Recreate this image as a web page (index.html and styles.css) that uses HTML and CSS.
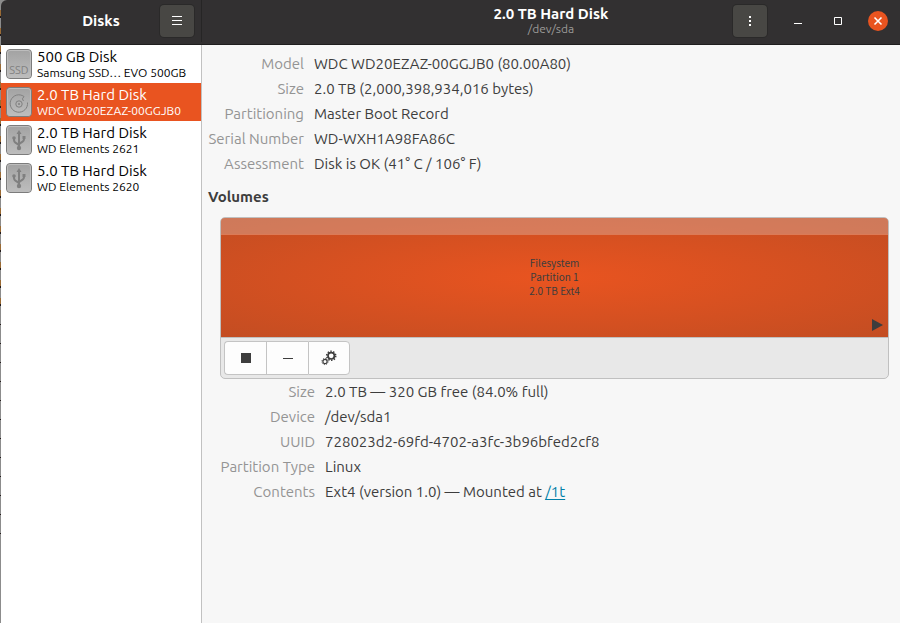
FILE: index.html
```html
<!DOCTYPE html>
<html lang="en">
<head>
<meta charset="utf-8">
<title>Disks</title>
<link rel="stylesheet" href="styles.css">
</head>
<body>
<div class="window">
  <header class="titlebar">
    <div class="titlebar-side">
      <h1 class="app-title">Disks</h1>
      <button class="header-button" type="button" aria-label="Application menu">
        <svg width="16" height="16" viewBox="0 0 16 16"><path d="M3 3.500h10M3 7.500h10M3 11.500h10" stroke="#fff"/></svg>
      </button>
    </div>
    <div class="titlebar-main">
      <div class="disk-title">
        <h2>2.0 TB Hard Disk</h2>
        <p>/dev/sda</p>
      </div>
      <div class="controls">
        <button class="header-button" type="button" aria-label="Drive options">
          <svg width="16" height="16" viewBox="0 0 16 16"><path d="M7 3h2v2H7zM7 7h2v2H7zM7 11h2v2H7z" fill="#fff"/></svg>
        </button>
        <button class="window-button" type="button" aria-label="Minimize">
          <svg width="20" height="20" viewBox="0 0 20 20"><path d="M6 12h8v1H6z" fill="#fff"/></svg>
        </button>
        <button class="window-button" type="button" aria-label="Maximize">
          <svg width="20" height="20" viewBox="0 0 20 20"><path d="M6.500 6.500h7v7h-7z" fill="none" stroke="#fff"/></svg>
        </button>
        <button class="window-button close" type="button" aria-label="Close">
          <svg width="20" height="20" viewBox="0 0 20 20"><path d="M6.500 6.500l7 7M13.500 6.500l-7 7" stroke="#fff" stroke-width="1.600"/></svg>
        </button>
      </div>
    </div>
  </header>

  <div class="content">
    <nav class="sidebar" aria-label="Drives">
      <button class="drive" type="button">
        <svg class="drive-icon" width="26" height="30" viewBox="0 0 26 30">
          <defs>
            <linearGradient id="metal" x1="0" y1="0" x2="0" y2="1">
              <stop offset="0" stop-color="#a2a2a2"/><stop offset="1" stop-color="#bebebe"/>
            </linearGradient>
          </defs>
          <rect class="case" x=".5" y=".5" width="25" height="29" rx="3.500"/><rect class="shine" x="1.500" y="1.500" width="23" height="27" rx="2.500"/>
          <text class="drive-tag" x="13" y="25" text-anchor="middle">SSD</text>
        </svg>
        <span class="drive-text"><span class="drive-name">500 GB Disk</span><span class="drive-model">Samsung SSD… EVO 500GB</span></span>
      </button>
      <button class="drive selected" type="button" aria-current="true">
        <svg class="drive-icon" width="26" height="30" viewBox="0 0 26 30">
          <rect class="case" x=".5" y=".5" width="25" height="29" rx="3.500"/><rect class="shine" x="1.500" y="1.500" width="23" height="27" rx="2.500"/>
          <path class="mark-line" d="M18 9.500A8.700 8.700 0 1 0 21.500 15.500M18 9.500Q15 12 17.500 14"/>
          <circle class="mark-line" cx="13" cy="17" r="3.200"/>
          <circle class="mark" cx="13" cy="17" r="1"/>
        </svg>
        <span class="drive-text"><span class="drive-name">2.0 TB Hard Disk</span><span class="drive-model">WDC WD20EZAZ-00GGJB0</span></span>
      </button>
      <button class="drive" type="button">
        <svg class="drive-icon" width="26" height="30" viewBox="0 0 26 30">
          <rect class="case" x=".5" y=".5" width="25" height="29" rx="3.500"/><rect class="shine" x="1.500" y="1.500" width="23" height="27" rx="2.500"/>
          <path class="mark-line usb" d="M13 23V8M13 21c0-3-5-2-5-6v-2M13 20c0-3 5-2 5-6v-2"/>
          <path class="mark" d="M13 5l2.500 4h-5zM16.500 11h3v3h-3z"/><circle class="mark" cx="8" cy="13" r="1.800"/><circle class="mark" cx="13" cy="23" r="2.200"/>
        </svg>
        <span class="drive-text"><span class="drive-name">2.0 TB Hard Disk</span><span class="drive-model">WD Elements 2621</span></span>
      </button>
      <button class="drive" type="button">
        <svg class="drive-icon" width="26" height="30" viewBox="0 0 26 30">
          <rect class="case" x=".5" y=".5" width="25" height="29" rx="3.500"/><rect class="shine" x="1.500" y="1.500" width="23" height="27" rx="2.500"/>
          <path class="mark-line usb" d="M13 23V8M13 21c0-3-5-2-5-6v-2M13 20c0-3 5-2 5-6v-2"/>
          <path class="mark" d="M13 5l2.500 4h-5zM16.500 11h3v3h-3z"/><circle class="mark" cx="8" cy="13" r="1.800"/><circle class="mark" cx="13" cy="23" r="2.200"/>
        </svg>
        <span class="drive-text"><span class="drive-name">5.0 TB Hard Disk</span><span class="drive-model">WD Elements 2620</span></span>
      </button>
    </nav>

    <main class="details">
      <dl class="facts">
        <dt>Model</dt><dd>WDC WD20EZAZ-00GGJB0 (80.00A80)</dd>
        <dt>Size</dt><dd>2.0 TB (2,000,398,934,016 bytes)</dd>
        <dt>Partitioning</dt><dd>Master Boot Record</dd>
        <dt>Serial Number</dt><dd>WD-WXH1A98FA86C</dd>
        <dt>Assessment</dt><dd>Disk is OK (41° C / 106° F)</dd>
      </dl>

      <h3 class="section-title">Volumes</h3>

      <section class="volumes" aria-label="Volumes">
        <div class="volume-map">
          <div class="free-band"></div>
          <div class="partition">
            <p>Filesystem<br>Partition 1<br>2.0 TB Ext4</p>
            <svg class="mounted" width="11" height="12" viewBox="0 0 11 12"><path d="M0 0l11 6-11 6z" fill="#3d3d3d"/></svg>
          </div>
        </div>
        <div class="toolbar">
          <div class="button-group">
            <button type="button" aria-label="Unmount selected partition">
              <svg width="16" height="16" viewBox="0 0 16 16"><path d="M3 3h10v10H3z" fill="#3d3d3d"/></svg>
            </button>
            <button type="button" aria-label="Delete selected partition">
              <svg width="16" height="16" viewBox="0 0 16 16"><path d="M3 8h10v1H3z" fill="#3d3d3d"/></svg>
            </button>
            <button type="button" aria-label="Additional partition options">
              <svg width="16" height="16" viewBox="0 0 16 16" fill="none" stroke="#3d3d3d">
                <circle cx="10.200" cy="5.800" r="3.200" stroke-width="1.700"/>
                <circle cx="10.200" cy="5.800" r="4.500" stroke-width="1.600" stroke-dasharray="1.400 1.427"/>
                <circle cx="4" cy="11.500" r="2.100" stroke-width="1.200"/>
                <circle cx="4" cy="11.500" r="3.100" stroke-width="1" stroke-dasharray="1.100 1.335"/>
              </svg>
            </button>
          </div>
        </div>
      </section>

      <dl class="facts volume-facts">
        <dt>Size</dt><dd>2.0 TB — 320 GB free (84.0% full)</dd>
        <dt>Device</dt><dd>/dev/sda1</dd>
        <dt>UUID</dt><dd>728023d2-69fd-4702-a3fc-3b96bfed2cf8</dd>
        <dt>Partition Type</dt><dd>Linux</dd>
        <dt>Contents</dt><dd>Ext4 (version 1.0) — Mounted at <a href="#">/1t</a></dd>
      </dl>
    </main>
  </div>
</div>
</body>
</html>
```
FILE: styles.css
```css
* { box-sizing: border-box; }

body {
  margin: 0;
  padding-left: 1px;
  min-height: 100vh;
  background: repeating-linear-gradient(#8c8c8c 0 10px, #9a6a34 10px 16px, #221a1a 16px 18px) 0 0 / 100% 306px no-repeat,
    repeating-linear-gradient(#8c8c8c 0 18px, #221a1a 18px 19px) 0 306px / 100% 246px no-repeat #8c8c8c;
  color: #3d3d3d;
  font: 15px/25px Ubuntu, "Noto Sans", sans-serif;
}

h1, h2, h3, p, dl, dd { margin: 0; }

button {
  padding: 0;
  border: 0;
  background: none;
  color: inherit;
  font: inherit;
}

svg { display: block; }

.window {
  display: flex;
  flex-direction: column;
  min-height: 100vh;
}

/* Title bar */
.titlebar {
  display: flex;
  height: 45px;
  padding-bottom: 2px;
  background: #323031;
  border-bottom: 1px solid #1f1e1e;
  border-top-left-radius: 6px;
  color: #fff;
}

.titlebar-side,
.titlebar-main {
  display: grid;
  grid-template-columns: 1fr auto 1fr;
  align-items: center;
}

.titlebar-side {
  width: 201px;
  padding: 0 7px;
  border-right: 1px solid #262525;
}

.titlebar-main {
  flex: 1;
  padding: 0 12px;
}

.app-title,
.disk-title h2 {
  font-size: 15px;
  font-weight: 700;
  line-height: 16px;
}

.app-title { grid-column: 2; }

.titlebar-side .header-button { justify-self: end; }

.disk-title {
  grid-column: 2;
  text-align: center;
}

.disk-title p {
  color: #9b9a98;
  font-size: 12px;
  line-height: 14px;
}

.header-button {
  display: grid;
  place-items: center;
  width: 34px;
  height: 32px;
  border-radius: 4px;
  background: #484744;
  box-shadow: 0 0 0 1px #2a2929;
}

.controls {
  display: flex;
  align-items: center;
  justify-self: end;
  gap: 20px;
}

.window-button { border-radius: 50%; }
.controls .header-button { margin-right: 1px; }
.close { background: #e95420; }

/* Drive list */
.content {
  display: flex;
  flex: 1;
}

.sidebar {
  width: 201px;
  border-right: 1px solid #c1c1c1;
  background: #fff;
}

.drive {
  display: flex;
  align-items: center;
  gap: 5px;
  width: 100%;
  height: 38px;
  padding-left: 5px;
  color: #000;
  text-align: left;
  white-space: nowrap;
}

.drive.selected {
  background: #e95420;
  color: #fff;
}

.drive-name,
.drive-model { display: block; }

.drive-name { line-height: 16px; }

.drive-model {
  font-size: 12px;
  line-height: 15px;
}

.drive-icon { flex: none; }
.case { fill: url(#metal); stroke: #7c7c7c; }
.shine { fill: none; stroke: #bdbdbd; }
.mark { fill: #808080; }
.mark-line { fill: none; stroke: #808080; stroke-width: 1; }
.usb { stroke-width: 2; }

.drive-tag {
  fill: #808080;
  font-size: 11px;
}

/* Details */
.details {
  flex: 1;
  min-width: 0;
  padding: 6px 11px 6px 6px;
  background: #f7f7f7;
}

.facts {
  display: grid;
  grid-template-columns: 96px 1fr;
  column-gap: 10px;
}

.facts dt {
  color: #949494;
  text-align: right;
  white-space: nowrap;
}

.section-title {
  margin: 9px 0 8px;
  font-size: 15px;
  line-height: 24px;
}

.volumes {
  margin-left: 12px;
  border: 1px solid #c0c0c0;
  border-radius: 5px;
  background: #e8e8e8;
  overflow: hidden;
}

.volume-map {
  border-bottom: 1px solid #c0c0c0;
  background: radial-gradient(ellipse farthest-corner at 50% 50%, #e95420, #c34d22);
}

.free-band {
  height: 17px;
  border-bottom: 1px solid #dc7a56;
  background: rgba(222, 184, 170, 0.42);
}

.partition {
  position: relative;
  display: grid;
  place-items: center;
  height: 102px;
  padding-bottom: 18px;
}

.partition p {
  font-family: "Noto Sans CJK SC", "Noto Sans", sans-serif;
  font-size: 10px;
  line-height: 14px;
  text-align: center;
}

.mounted {
  position: absolute;
  right: 5px;
  bottom: 6px;
}

.toolbar {
  display: flex;
  padding: 3px;
}

.button-group {
  display: flex;
}

.button-group button {
  display: grid;
  place-items: center;
  width: 42px;
  height: 34px;
  border: 1px solid #c4c4c4;
  background: #fdfdfd;
}

.button-group button:not(:last-child) { border-right: 0; }
.button-group button:first-child { border-radius: 4px 0 0 4px; }
.button-group button:last-child { border-radius: 0 4px 4px 0; }

.volume-facts {
  grid-template-columns: 107px 1fr;
}

.facts a { color: #007fa8; text-underline-offset: 2px; }
```
